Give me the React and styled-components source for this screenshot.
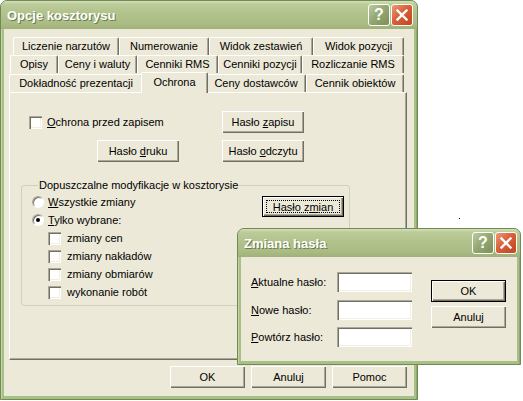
import React from 'react';
import styled, { createGlobalStyle } from 'styled-components';

const GlobalStyle = createGlobalStyle`
  body {
    margin: 0;
    background: #fff;
    font-family: 'Liberation Sans', Arial, sans-serif;
    font-size: 11px;
    color: #000;
  }
`;

const Desktop = styled.div`
  position: relative;
  width: 523px;
  height: 401px;
  overflow: hidden;
  background: #fff;
`;

const Speck = styled.div`
  position: absolute;
  left: 459px;
  top: 218px;
  width: 1px;
  height: 1px;
  background: #000;
`;

const Window = styled.div`
  position: absolute;
  left: ${p => p.$x}px;
  top: ${p => p.$y}px;
  width: ${p => p.$w}px;
  height: ${p => p.$h}px;
  box-sizing: border-box;
  display: flex;
  flex-direction: column;
  background: #a9bf88;
  border: 1px solid #6f8c52;
  border-radius: 7px 7px 0 0;
  box-shadow: inset 1px 0 #c3d3a6, inset -1px 0 #8ea873;
`;

const TitleBar = styled.div`
  height: 28px;
  flex: none;
  display: flex;
  align-items: center;
  padding: 0 ${p => p.$pr || 4}px 0 6px;
  border-radius: 6px 6px 0 0;
  background: linear-gradient(#d3dfbb 0%, #bccb98 12%, #b2c28c 45%, #abbb84 80%, #9fb179 100%);
`;

const Title = styled.div`
  flex: 1;
  color: #fff;
  font: bold 13px 'Liberation Sans', Arial, sans-serif;
  text-shadow: 1px 1px #6c7d4c;
`;

const CapButton = styled.div`
  box-sizing: border-box;
  width: 22px;
  height: 22px;
  margin-left: 1px;
  border: 1px solid #fff;
  border-radius: 3px;
  display: flex;
  align-items: center;
  justify-content: center;
  color: #fff;
  font: bold 16px 'Liberation Sans', Arial, sans-serif;
  background: ${p => p.$close
    ? 'linear-gradient(135deg, #ec9a78 0%, #d95f38 45%, #c2461f 100%)'
    : 'linear-gradient(135deg, #bccb9f 0%, #96a972 45%, #7b8f57 100%)'};
`;

const Body = styled.div`
  flex: 1;
  margin: 0 3px 3px;
  background: #ece9d8;
  display: flex;
  flex-direction: column;
  box-sizing: border-box;
  padding: ${p => p.$pad};
`;

const TabRow = styled.div`
  display: flex;
  align-items: flex-end;
  height: ${p => p.$h || 18}px;
  margin-left: ${p => p.$indent || 0}px;
`;

const Tab = styled.div`
  position: relative;
  box-sizing: border-box;
  width: ${p => p.$w + (p.$active ? 4 : 0)}px;
  height: ${p => (p.$active ? 21 : 18)}px;
  margin: 0 ${p => (p.$active ? -2 : 0)}px ${p => (p.$active ? -1 : 0)}px;
  z-index: ${p => (p.$active ? 2 : 1)};
  display: flex;
  align-items: center;
  justify-content: center;
  padding-bottom: ${p => (p.$active ? 3 : 1)}px;
  white-space: nowrap;
  background: #ece9d8;
  border-left: 1px solid #fff;
  border-top: 1px solid #fff;
  border-right: 1px solid #716f64;
  box-shadow: inset -1px 0 #aca899;
  border-radius: 2px 2px 0 0;
`;

const Panel = styled.div`
  box-sizing: border-box;
  height: 268px;
  padding: 18px 0 0 11px;
  border-left: 1px solid #fff;
  border-top: 1px solid #fff;
  border-right: 1px solid #716f64;
  border-bottom: 1px solid #716f64;
  box-shadow: inset -1px -1px #aca899;
`;

const PasswordGrid = styled.div`
  display: grid;
  grid-template-columns: 68px 82px 43px 82px;
  grid-auto-rows: 22px;
  row-gap: 7px;
  padding-left: 8px;
`;

const Choice = styled.label`
  display: flex;
  align-items: center;
  gap: ${p => p.$gap || 5}px;
  height: ${p => p.$h || 18}px;
  padding-left: ${p => p.$indent || 0}px;
  grid-column: ${p => p.$span || 'auto'};
  white-space: nowrap;
`;

const Box = styled.span`
  box-sizing: border-box;
  width: 13px;
  height: 13px;
  flex: none;
  background: #fff;
  box-shadow: inset 1px 1px #aca899, inset 2px 2px #716f64, inset -1px -1px #fff, inset -2px -2px #f1efe2;
`;

const Radio = styled.span`
  position: relative;
  box-sizing: border-box;
  width: 12px;
  height: 12px;
  flex: none;
  border-radius: 50%;
  background: #fff;
  border: 1px solid;
  border-color: #aca899 #fff #fff #aca899;
  box-shadow: inset 1px 1px #716f64;
  &::after {
    content: '';
    display: ${p => (p.$on ? 'block' : 'none')};
    position: absolute;
    left: 3px;
    top: 3px;
    width: 4px;
    height: 4px;
    border-radius: 50%;
    background: #000;
  }
`;

const Key = styled.span`
  text-decoration: underline;
  text-underline-offset: 1px;
`;

const Button = styled.button`
  box-sizing: border-box;
  width: ${p => p.$w || 75}px;
  height: ${p => p.$h || 22}px;
  grid-column: ${p => p.$col || 'auto'};
  margin-top: ${p => p.$mt || 0}px;
  padding: 0;
  font: 11px 'Liberation Sans', Arial, sans-serif;
  color: #000;
  background: #ece9d8;
  border: ${p => (p.$default ? '1px solid #000' : 'none')};
  box-shadow: inset 1px 1px #fff, inset -1px -1px #716f64, inset -2px -2px #aca899;
  outline: ${p => (p.$focus ? '1px dotted #000' : 'none')};
  outline-offset: -5px;
`;

const Group = styled.fieldset`
  box-sizing: border-box;
  width: 329px;
  height: 127px;
  margin: 17px 0 0 0;
  padding: 1px 5px 0 10px;
  min-width: 0;
  border: 1px solid #d0d0bf;
  border-radius: 3px;
  display: flex;
  justify-content: space-between;
  align-items: flex-start;
`;

const Legend = styled.legend`
  padding: 0 1px;
  margin-left: 6px;
`;

const Options = styled.div`
  display: flex;
  flex-direction: column;
`;

const Footer = styled.div`
  display: flex;
  justify-content: flex-end;
  gap: 6px;
  margin-top: 6px;
`;

const DialogBody = styled.div`
  display: flex;
  align-items: flex-start;
`;

const FieldGrid = styled.div`
  display: grid;
  grid-template-columns: 86px 75px;
  grid-auto-rows: 20px;
  row-gap: 7.5px;
  align-items: center;
`;

const Field = styled.div`
  box-sizing: border-box;
  width: 75px;
  height: 20px;
  background: #fff;
  box-shadow: inset 1px 1px #aca899, inset 2px 2px #716f64, inset -1px -1px #fff, inset -2px -2px #f1efe2;
`;

const ButtonColumn = styled.div`
  display: flex;
  flex-direction: column;
  gap: 4px;
  margin: 8px 0 0 19px;
`;

const CloseIcon = () => (
  <svg width="12" height="12" viewBox="0 0 12 12">
    <path d="M1.5 1.5 L10.5 10.5 M10.5 1.5 L1.5 10.5" stroke="#fff" strokeWidth="2.4" strokeLinecap="square" />
  </svg>
);

const Caption = ({ title, pr }) => (
  <TitleBar $pr={pr}>
    <Title>{title}</Title>
    <CapButton>?</CapButton>
    <CapButton $close><CloseIcon /></CapButton>
  </TitleBar>
);

const tabRows = [
  { indent: 4, h: 18, tabs: [['Liczenie narzutów', 106], ['Numerowanie', 90], ['Widok zestawień', 104], ['Widok pozycji', 91]] },
  { indent: 1, h: 18, tabs: [['Opisy', 48], ['Ceny i waluty', 79], ['Cenniki RMS', 81], ['Cenniki pozycji', 84], ['Rozliczanie RMS', 102]] },
  { indent: 0, h: 19, tabs: [['Dokładność prezentacji', 134], ['Ochrona', 63], ['Ceny dostawców', 100], ['Cennik obiektów', 98]] },
];

const changes = ['zmiany cen', 'zmiany nakładów', 'zmiany obmiarów', 'wykonanie robót'];

export default function App() {
  return (
    <Desktop>
      <GlobalStyle />
      <Speck />
      <Window $x={0} $y={0} $w={418} $h={400}>
        <Caption title="Opcje kosztorysu" pr={4} />
        <Body $pad="8px 7px 0 5px">
          {tabRows.map((row, i) => (
            <TabRow key={i} $indent={row.indent} $h={row.h}>
              {row.tabs.map(([label, w]) => (
                <Tab key={label} $w={w} $active={label === 'Ochrona'}>{label}</Tab>
              ))}
            </TabRow>
          ))}
          <Panel>
            <PasswordGrid>
              <Choice $span="1 / 4" $h={22}>
                <Box />
                <span><Key>O</Key>chrona przed zapisem</span>
              </Choice>
              <Button $col="4" $w={82}>Hasło <Key>z</Key>apisu</Button>
              <Button $col="2" $w={82}>Hasło <Key>d</Key>ruku</Button>
              <Button $col="4" $w={82}>Hasło <Key>o</Key>dczytu</Button>
            </PasswordGrid>
            <Group>
              <Legend>Dopuszczalne modyfikacje w kosztorysie</Legend>
              <Options>
                <Choice $h={19} $gap={4}>
                  <Radio />
                  <span><Key>W</Key>szystkie zmiany</span>
                </Choice>
                <Choice $gap={4}>
                  <Radio $on />
                  <span><Key>T</Key>ylko wybrane:</span>
                </Choice>
                {changes.map(c => (
                  <Choice key={c} $indent={16} $gap={6}>
                    <Box />
                    <span>{c}</span>
                  </Choice>
                ))}
              </Options>
              <Button $w={82} $h={21} $mt={4} $default $focus>Hasło z<Key>m</Key>ian</Button>
            </Group>
          </Panel>
          <Footer>
            <Button>OK</Button>
            <Button>Anuluj</Button>
            <Button>Pomoc</Button>
          </Footer>
        </Body>
      </Window>

      <Window $x={237} $y={228} $w={284} $h={137}>
        <Caption title="Zmiana hasła" pr={3} />
        <Body $pad="15px 0 0 10px">
          <DialogBody>
            <FieldGrid>
              <span><Key>A</Key>ktualne hasło:</span>
              <Field />
              <span><Key>N</Key>owe hasło:</span>
              <Field />
              <span><Key>P</Key>owtórz hasło:</span>
              <Field />
            </FieldGrid>
            <ButtonColumn>
              <Button $default>OK</Button>
              <Button>Anuluj</Button>
            </ButtonColumn>
          </DialogBody>
        </Body>
      </Window>
    </Desktop>
  );
}
